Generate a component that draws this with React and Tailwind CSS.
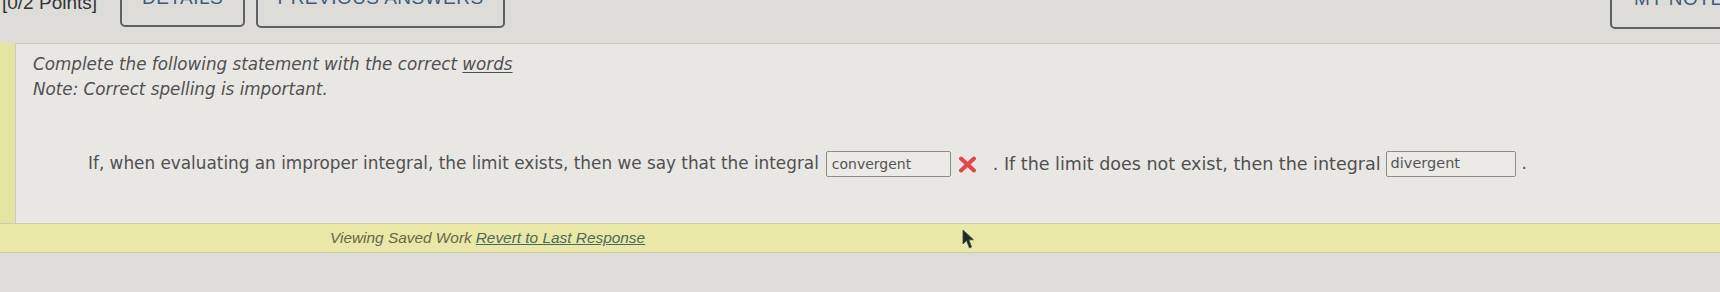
import React from "react";

function WrongMark() {
	return (
		<svg width="19" height="17" viewBox="0 0 19 17" className="shrink-0">
			<path d="M3 2.5 L16 14.5 M16 2.5 L3 14.5" stroke="#e2454c" strokeWidth="4" strokeLinecap="round" />
		</svg>
	);
}

function Cursor() {
	return (
		<svg width="13" height="21" viewBox="0 0 13 21" className="absolute left-[962px] top-[229px]">
			<path d="M1 1 L1 15 L4.5 11.5 L7.5 19 L9.5 18 L6.8 10.8 L11.5 10.8 Z" fill="#1f2a24" stroke="#3a463f" strokeWidth="0.8" />
		</svg>
	);
}

export default function App() {
	return (
		<div className="relative w-[1720px] h-[292px] overflow-hidden bg-[#dddcd9] font-['DejaVu_Sans',sans-serif] text-[#505050]">
			{/* toolbar, mostly scrolled out of view */}
			<div className="flex items-start h-[43px] font-['Liberation_Sans',Arial,sans-serif]">
				<span className="-mt-[8px] pl-[2px] text-[19px] leading-[22px] text-[#333] whitespace-nowrap">
					[0/2 Points]
				</span>
				<button className="ml-[23px] -mt-[18px] w-[125px] h-[45px] flex justify-center pt-[3px] border-2 border-[#5d6166] rounded-[5px] text-[19px] leading-[22px] text-[#3e5c7a] tracking-wide">
					DETAILS
				</button>
				<button className="ml-[11px] -mt-[17px] w-[249px] h-[45px] flex justify-center pt-[2px] border-2 border-[#5d6166] rounded-[5px] text-[19px] leading-[22px] text-[#3e5c7a] tracking-wide">
					PREVIOUS ANSWERS
				</button>
				<button className="ml-auto -mr-[40px] -mt-[16px] w-[150px] h-[45px] flex justify-start pl-[22px] pt-[2px] border-2 border-[#5d6166] rounded-[5px] text-[19px] leading-[22px] text-[#3e5c7a] tracking-wide whitespace-nowrap">
					MY NOTES
				</button>
			</div>

			{/* question body */}
			<div className="flex h-[180px]">
				<div className="w-[15px] bg-[#e3e3a2]" />
				<div className="flex-1 bg-[#e8e7e4] border border-r-0 border-b-0 border-[#cbcac5] pl-[17px] pt-[8px]">
					<p className="italic text-[16.75px] leading-[25px]">
						Complete the following statement with the correct <span className="underline underline-offset-2">words</span>
					</p>
					<p className="italic text-[16.75px] leading-[25px]">Note: Correct spelling is important.</p>

					<div className="flex items-center h-[26px] mt-[49px] pl-[55px] text-[16.85px] whitespace-nowrap">
						<span>If, when evaluating an improper integral, the limit exists, then we say that the integral</span>
						<div className="ml-[7px] w-[125px] h-[26px] flex items-center px-[5px] border border-[#8c8c8a] rounded-[2px] bg-[#ebeae7] text-[14px] text-[#555]">
							convergent
						</div>
						<div className="ml-[7px]">
							<WrongMark />
						</div>
						<span className="ml-[16px] text-[17.5px]">. If the limit does not exist, then the integral</span>
						<div className="ml-[5px] w-[130px] h-[26px] flex items-center px-[4px] border border-[#8c8c8a] rounded-[2px] bg-[#ebeae7] text-[14.5px] text-[#555]">
							divergent
						</div>
						<span className="ml-[6px]">.</span>
					</div>
				</div>
			</div>

			{/* saved work bar */}
			<div className="h-[30px] flex items-center bg-[#eae8a6] border-y border-[#cfcdaa] pl-[330px] font-['Liberation_Sans',Arial,sans-serif] italic text-[15.4px] text-[#66664f] whitespace-nowrap">
				<span>Viewing Saved Work</span>
				<a href="#" className="ml-[4px] underline text-[#4a6a60]">
					Revert to Last Response
				</a>
			</div>

			<Cursor />
		</div>
	);
}
